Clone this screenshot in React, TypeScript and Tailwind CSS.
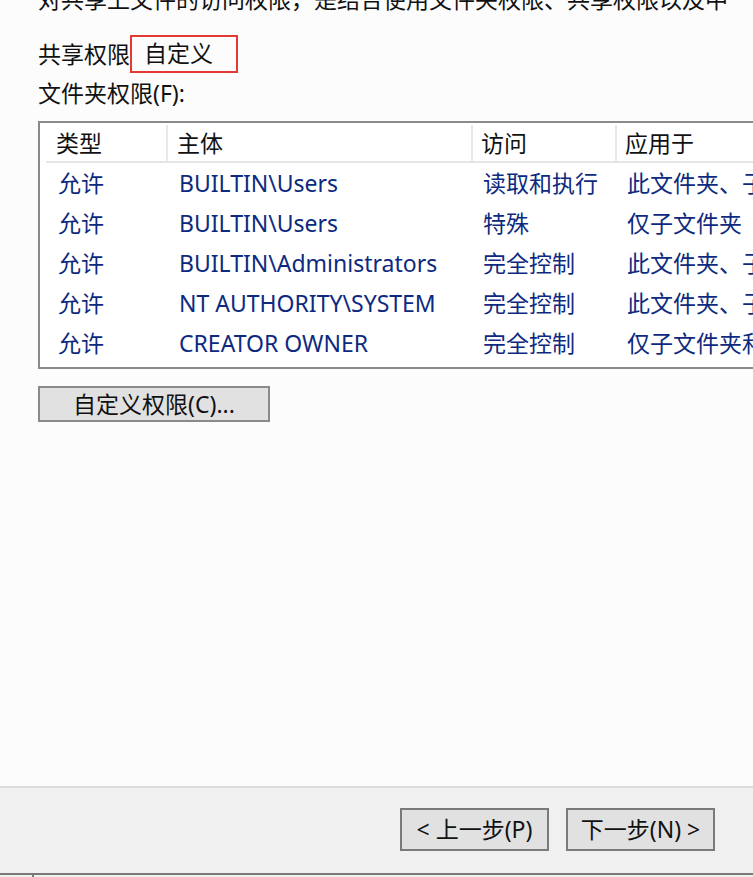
export default function App() {
  const rows = [
    ["允许", "BUILTIN\\Users", "读取和执行", "此文件夹、子文件夹和文件"],
    ["允许", "BUILTIN\\Users", "特殊", "仅子文件夹"],
    ["允许", "BUILTIN\\Administrators", "完全控制", "此文件夹、子文件夹和文件"],
    ["允许", "NT AUTHORITY\\SYSTEM", "完全控制", "此文件夹、子文件夹和文件"],
    ["允许", "CREATOR OWNER", "完全控制", "仅子文件夹和文件"],
  ];
  const font = { fontFamily: '"Noto Sans", "Noto Sans CJK SC", sans-serif' };
  return (
    <div className="w-[753px] h-[877px] overflow-hidden bg-[#fcfcfc] text-[23px] text-[#111] flex flex-col" style={font}>
      <div className="flex-1 pl-[38px] overflow-hidden">
        <div className="h-[30px] leading-[30px] -mt-[16px] whitespace-nowrap overflow-hidden">对共享上文件的访问权限，是结合使用文件夹权限、共享权限以及中</div>
        <div className="mt-[21px] flex items-center h-[38px]">
          <span>共享权限</span>
          <span className="ml-[0px] border-2 border-[#e53935] h-[38px] w-[108px] pl-[12px] leading-[32px]">自定义</span>
        </div>
        <div className="h-[36px] leading-[36px] mt-[2px]">文件夹权限(F):</div>
        <div className="mt-[10px] border-2 border-r-0 border-[#8a8a8a] h-[248px] bg-white pt-[2px] pl-[6px] whitespace-nowrap overflow-hidden">
          <div className="flex h-[38px] items-center border-b-2 border-[#e5e5e5]">
            <div className="w-[122px] pl-[10px] border-r-2 border-[#e8e8e8] h-full flex items-center">类型</div>
            <div className="w-[305px] pl-[9px] border-r-2 border-[#e8e8e8] h-full flex items-center">主体</div>
            <div className="w-[144px] pl-[8px] border-r-2 border-[#e8e8e8] h-full flex items-center">访问</div>
            <div className="flex-1 pl-[8px] h-full flex items-center">应用于</div>
          </div>
          {rows.map((r, i) => (
            <div key={i} className="flex h-[40px] items-center text-[#0d2a80]">
              <div className="w-[122px] pl-[12px]">{r[0]}</div>
              <div className="w-[305px] pl-[11px]">{r[1]}</div>
              <div className="w-[144px] pl-[10px]">{r[2]}</div>
              <div className="flex-1 pl-[10px] overflow-hidden">{r[3]}</div>
            </div>
          ))}
        </div>
        <button className="mt-[17px] w-[232px] h-[36px] border-2 border-[#8a8a8a] bg-[#e1e1e1] leading-[30px]">自定义权限(C)...</button>
      </div>
      <div className="h-[91px] shrink-0 bg-[#f0f0f0] border-t-2 border-[#dcdcdc] flex flex-col">
        <div className="flex-1 flex justify-end items-start pt-[20px] pr-[38px] gap-[17px]">
          <button className="w-[149px] h-[43px] border-2 border-[#7a7a7a] bg-[#e1e1e1]">&lt; 上一步(P)</button>
          <button className="w-[149px] h-[43px] border-2 border-[#7a7a7a] bg-[#e1e1e1]">下一步(N) &gt;</button>
        </div>
        <div className="h-[4px] border-t-2 border-[#7a7a7a] relative">
          <div className="absolute left-[32px] top-0 w-[2px] h-[4px] bg-[#7a7a7a]" />
        </div>
      </div>
    </div>
  );
}
